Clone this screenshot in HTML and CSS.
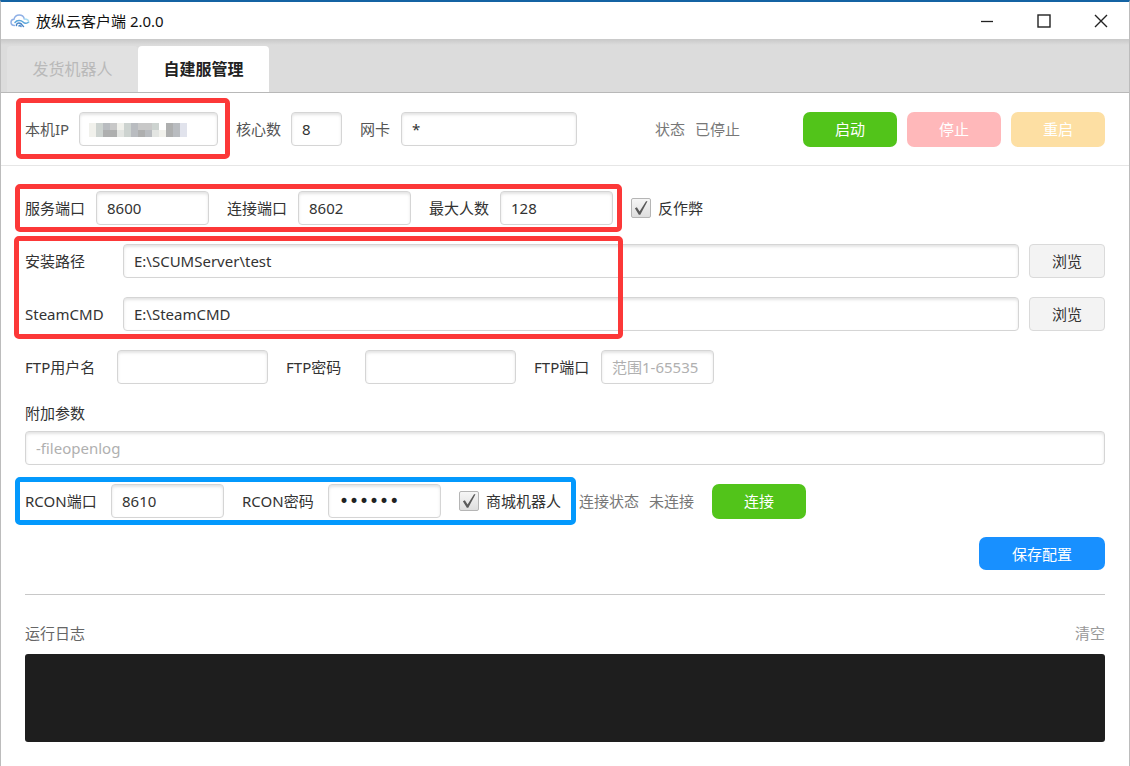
FILE: index.html
```html
<!DOCTYPE html>
<html lang="zh-CN">

<head>
    <meta charset="UTF-8">
    <meta name="viewport" content="width=device-width, initial-scale=1.0">
    <title>放纵云客户端 2.0.0</title>
    <link rel="stylesheet" href="styles.css">
</head>
<body>
<header class="titlebar">
    <svg class="logo" width="20" height="14" viewBox="0 0 20 14" fill="none" stroke-linecap="round">
        <path d="M4.500 11.500C2.300 11.500 1 10 1 8.300C1 6.500 2.300 5.300 4 5.200C4.600 2.600 6.700 1 9.200 1C11.800 1 13.700 2.500 14.300 4.800" stroke="#8fb0e6" stroke-width="1.500"/>
        <path d="M14.300 5C17 5 18.800 6.500 18.800 8.500" stroke="#a9dcf2" stroke-width="1.500"/>
        <path d="M5 8.500C7 6 11 6 13 8C14.500 9.500 16.500 9.500 18 8.500" stroke="#5aa6dc" stroke-width="1.500"/>
        <path d="M6.500 11.500C6 9.500 8.500 8.500 10.500 9.500C11.800 10.200 12 11.500 13.500 12.500M9 12C9.500 11.300 10.500 11.500 11 12.500" stroke="#4a86c8" stroke-width="1.500"/>
    </svg>
    <span class="title">放纵云客户端 2.0.0</span>
    <div class="window-buttons">
        <button type="button" aria-label="最小化"><svg width="14" height="14" viewBox="0 0 14 14"><path d="M1 7.500H13" stroke="#222" stroke-width="1.300"/></svg></button>
        <button type="button" aria-label="最大化"><svg width="14" height="14" viewBox="0 0 14 14"><rect x="1" y="1" width="12" height="12" fill="none" stroke="#222" stroke-width="1.400"/></svg></button>
        <button type="button" aria-label="关闭"><svg width="14" height="14" viewBox="0 0 14 14"><path d="M1 1L13 13M13 1L1 13" stroke="#222" stroke-width="1.400"/></svg></button>
    </div>
</header>

<nav class="tabs">
    <button type="button" class="tab" disabled>发货机器人</button>
    <button type="button" class="tab active">自建服管理</button>
</nav>

<section class="toolbar">
    <div class="field marked">
        <label for="localIp" class="w-ip">本机IP</label>
        <div class="ip-box">
            <input type="text" id="localIp" class="in-ip">
            <!-- masked address -->
            <svg class="mosaic" width="98" height="14" viewBox="0 0 98 14" shape-rendering="crispEdges">
                <path fill="#f1f1ec" d="M0 0h7v14H0zM28 0h7v7h-7zM70 7h7v7h-7z"/>
                <path fill="#cdd3d0" d="M7 0h7v14H7zM35 0h7v14h-7zM63 0h7v7h-7z"/>
                <path fill="#b9bcc0" d="M14 0h7v7h-7zM42 0h7v14h-7zM84 0h7v14h-7zM56 7h7v7h-7z"/>
                <path fill="#c8c8c8" d="M21 0h7v7h-7zM49 0h7v7h-7zM56 0h7v7h-7z"/>
                <path fill="#aeafaf" d="M14 7h14v7H14zM49 7h7v7h-7zM77 0h7v14h-7z"/>
                <path fill="#e3e5e2" d="M28 7h7v7h-7zM63 7h7v7h-7z"/>
                <path fill="#e1e3ec" d="M91 0h7v14h-7z"/>
            </svg>
        </div>
    </div>
    <div class="field">
        <label for="cores" class="w-cores">核心数</label>
        <input type="text" id="cores" class="in-cores" value="8">
    </div>
    <div class="field">
        <label for="netcard" class="w-net">网卡</label>
        <input type="text" id="netcard" class="in-net" value="*">
    </div>
    <div class="status push">
        <span>状态</span>
        <span>已停止</span>
    </div>
    <div class="actions">
        <button type="button" class="btn green">启动</button>
        <button type="button" class="btn red" disabled>停止</button>
        <button type="button" class="btn yellow" disabled>重启</button>
    </div>
</section>

<form class="config">
    <div class="row">
        <div class="row marked">
            <div class="field">
                <label for="servePort" class="w-port">服务端口</label>
                <input type="text" id="servePort" class="in-port" value="8600">
            </div>
            <div class="field">
                <label for="linkPort" class="w-port">连接端口</label>
                <input type="text" id="linkPort" class="in-port" value="8602">
            </div>
            <div class="field">
                <label for="maxPlayers" class="w-port">最大人数</label>
                <input type="text" id="maxPlayers" class="in-port" value="128">
            </div>
        </div>
        <label class="check"><input type="checkbox" checked>反作弊</label>
    </div>

    <div class="paths marked">
        <div class="field">
            <label for="installPath" class="w-path">安装路径</label>
            <input type="text" id="installPath" class="grow" value="E:\SCUMServer\test">
            <button type="button" class="browse">浏览</button>
        </div>
        <div class="field">
            <label for="steamCmd" class="w-path">SteamCMD</label>
            <input type="text" id="steamCmd" class="grow" value="E:\SteamCMD">
            <button type="button" class="browse">浏览</button>
        </div>
    </div>

    <div class="row">
        <div class="field">
            <label for="ftpUser" class="w-ftpuser">FTP用户名</label>
            <input type="text" id="ftpUser" class="in-ftp">
        </div>
        <div class="field">
            <label for="ftpPass" class="w-ftppass">FTP密码</label>
            <input type="password" id="ftpPass" class="in-ftp">
        </div>
        <div class="field">
            <label for="ftpPort" class="w-ftpport">FTP端口</label>
            <input type="text" id="ftpPort" class="in-port" placeholder="范围1-65535">
        </div>
    </div>

    <div class="extra">
        <label for="extraArgs">附加参数</label>
        <input type="text" id="extraArgs" placeholder="-fileopenlog">
    </div>

    <div class="row">
        <div class="row marked blue">
            <div class="field">
                <label for="rconPort" class="w-rcon">RCON端口</label>
                <input type="text" id="rconPort" class="in-port" value="8610">
            </div>
            <div class="field">
                <label for="rconPass" class="w-rcon">RCON密码</label>
                <input type="password" id="rconPass" class="in-port" value="123456">
            </div>
            <label class="check"><input type="checkbox" checked>商城机器人</label>
        </div>
        <div class="status">
            <span>连接状态</span>
            <span>未连接</span>
        </div>
        <button type="button" class="btn green">连接</button>
    </div>

    <button type="button" class="btn save">保存配置</button>
</form>

<section class="log">
    <div class="log-head">
        <span>运行日志</span>
        <button type="button" class="clear">清空</button>
    </div>
    <div class="log-view"></div>
</section>
</body>
</html>
```
FILE: styles.css
```css
* {
    box-sizing: border-box;
}

body {
    margin: 0;
    min-height: 100vh;
    display: flex;
    flex-direction: column;
    background: #fff;
    border: 1px solid #bcbcbc;
    border-top: 2px solid #1463a3;
    border-bottom: none;
    font-family: "Noto Sans", "Noto Sans CJK SC", sans-serif;
    font-size: 15px;
    line-height: 20px;
    color: #333;
}

input, button {
    font-family: inherit;
    font-size: 15px;
    line-height: 20px;
    color: #333;
}

button {
    padding: 0;
    border: none;
    background: none;
}

label, span {
    white-space: nowrap;
}

/* title bar */
.titlebar {
    display: flex;
    align-items: center;
    height: 37px;
    padding-left: 9px;
}

.title {
    margin-left: 6px;
    color: #111;
}

.window-buttons {
    display: flex;
    margin-left: auto;
}

.window-buttons button {
    display: flex;
    align-items: center;
    justify-content: center;
    width: 57px;
    height: 36px;
}

/* tabs */
.tabs {
    display: flex;
    align-items: flex-end;
    height: 54px;
    padding-left: 6px;
    background: linear-gradient(#c8c8c8, #dcdcdc 6px);
    border-bottom: 1px solid #b8b8b8;
}

.tab {
    width: 131px;
    height: 46px;
    border-radius: 4px 4px 0 0;
    background: #e1e1e1;
    font-size: 16px;
    color: #b9b9b9;
}

.tab.active {
    background: #fff;
    color: #222;
    font-weight: bold;
}

/* inputs */
input[type="text"], input[type="password"] {
    min-width: 0;
    height: 34px;
    padding: 0 10px;
    border: 1px solid #d5d5d5;
    border-radius: 4px;
    background: #fff;
    box-shadow: inset 0 2px 3px #e4e4e4;
}

input[type="password"] {
    font-family: "DejaVu Sans", sans-serif;
    font-size: 17px;
    color: #222;
}

input::placeholder {
    color: #b0b0b0;
}

.field {
    display: flex;
    align-items: center;
    gap: 10px;
}

.row {
    display: flex;
    align-items: center;
    gap: 18px;
    height: 34px;
}

.grow {
    flex: 1;
}

.w-ip { width: 44px; }
.w-cores { width: 45px; }
.w-net { width: 31px; }
.w-port { width: 61px; }
.w-path { width: 88px; }
.w-ftpuser { width: 82px; }
.w-ftppass { width: 69px; }
.w-ftpport { width: 57px; }
.w-rcon { width: 76px; }

.in-ip { width: 139px; }
.in-cores { width: 51px; }
.in-net { width: 176px; }
.in-port { width: 113px; }
.in-ftp { width: 151px; }

/* highlight frames over the fields */
.marked {
    position: relative;
}

.marked::after {
    content: "";
    position: absolute;
    inset: -7px -9px -7px -10px;
    border: 5px solid #fc3838;
    border-radius: 5px;
    pointer-events: none;
}

.marked.blue::after {
    inset: -7px -15px -7px -10px;
    border-color: #0399fd;
}

.toolbar .marked::after {
    inset: -14px -12px -13px -9px;
}

.paths.marked::after {
    inset: -8px auto -8px -11px;
    width: 609px;
    box-sizing: border-box;
}

/* top toolbar */
.toolbar {
    display: flex;
    align-items: center;
    gap: 18px;
    height: 73px;
    padding: 0 24px;
    border-bottom: 1px solid #e6e6e6;
    color: #555;
}

.ip-box {
    position: relative;
    display: flex;
}

.mosaic {
    position: absolute;
    left: 10px;
    top: 11px;
}

.status {
    display: flex;
    gap: 10px;
    color: #777;
}

.push {
    margin-left: auto;
}

.actions {
    display: flex;
    gap: 10px;
    margin-left: 45px;
}

.btn {
    width: 94px;
    height: 35px;
    border-radius: 7px;
    color: #fff;
}

.green {
    background: #52c41a;
}

.red {
    background: #ffb8ba;
}

.yellow {
    background: #fddfa3;
}

/* server config */
.config {
    display: flex;
    flex-direction: column;
    gap: 19px;
    margin: 0 24px;
    padding: 25px 0 24px;
    border-bottom: 1px solid #c8c8c8;
}

.check {
    display: flex;
    align-items: center;
    gap: 7px;
}

.check input {
    appearance: none;
    width: 20px;
    height: 20px;
    margin: 0;
    border: 1px solid #b5b5b5;
    border-radius: 2px;
    background: linear-gradient(#f6f6f6, #dedede);
}

.check input:checked::before {
    content: "";
    display: block;
    width: 18px;
    height: 18px;
    background: #5a5a5a;
    clip-path: polygon(16% 52%, 27% 46%, 42% 70%, 78% 12%, 86% 12%, 46% 88%, 38% 88%);
}

.paths {
    display: flex;
    flex-direction: column;
    gap: 19px;
}

.browse {
    width: 76px;
    height: 34px;
    border: 1px solid #dadada;
    border-radius: 4px;
    background: #f3f3f3;
}

.extra {
    display: flex;
    flex-direction: column;
    gap: 8px;
}

.save {
    align-self: flex-end;
    width: 126px;
    height: 33px;
    background: #1890ff;
}

/* log */
.log {
    flex: 1;
    display: flex;
    flex-direction: column;
    gap: 11px;
    padding: 28px 24px 24px;
    color: #666;
}

.log-head {
    display: flex;
    justify-content: space-between;
}

.clear {
    color: #999;
}

.log-view {
    flex: 1;
    min-height: 60px;
    border-radius: 3px;
    background: #1e1e1e;
}
```
